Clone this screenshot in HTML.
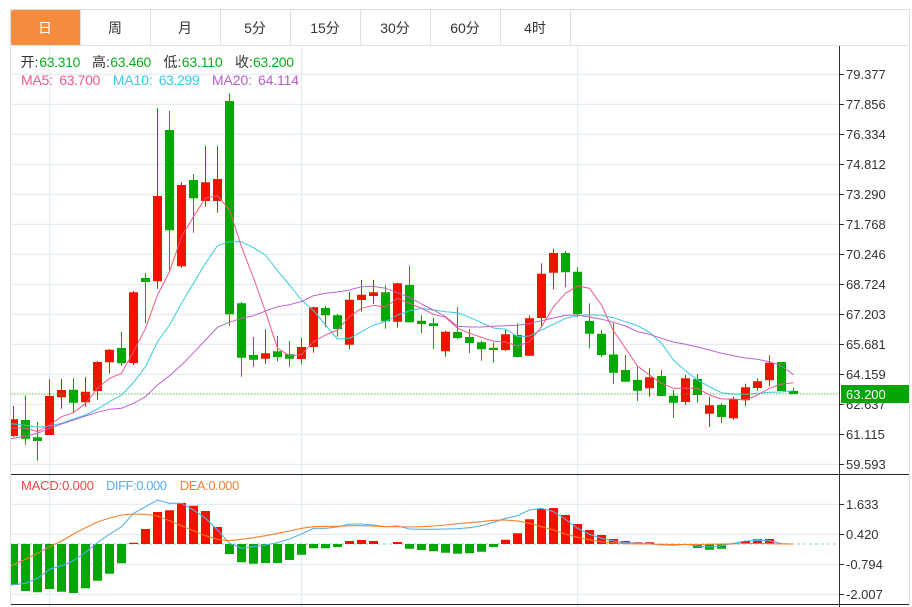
<!DOCTYPE html>
<html><head><meta charset="utf-8"><title>K线图</title>
<style>
html,body{margin:0;padding:0;background:#fff;width:912px;height:607px;overflow:hidden}
svg{display:block}
text{font-family:"Liberation Sans","Noto Sans CJK SC",sans-serif}
.ax{font-size:13px;fill:#333}
.tab{font-size:14px;fill:#333;text-anchor:middle}
.h{font-size:14px;fill:#333}
.g{font-size:14px;fill:#0cad1c}
</style></head><body>
<svg width="912" height="607" viewBox="0 0 912 607" xmlns="http://www.w3.org/2000/svg">
<defs><clipPath id="c"><rect x="11" y="46" width="828" height="561"/></clipPath></defs>
<rect x="11" y="10" width="70" height="35" rx="2" fill="#f68c3f"/>
<g stroke="#dddfe0" fill="none">
<path d="M10.5 9.5H909.5V606M10.5 9.5V606M11 45.5H909.5"/>
<path d="M80.5 10V45M150.5 10V45M220.5 10V45M290.5 10V45M360.5 10V45M430.5 10V45M500.5 10V45M570.5 10V45"/>
</g>
<text class="tab" x="45" y="33" style="fill:#fff">日</text>
<text class="tab" x="115" y="33">周</text>
<text class="tab" x="185" y="33">月</text>
<text class="tab" x="255" y="33">5分</text>
<text class="tab" x="325" y="33">15分</text>
<text class="tab" x="395" y="33">30分</text>
<text class="tab" x="465" y="33">60分</text>
<text class="tab" x="535" y="33">4时</text>

<g stroke="#e3ecf2" stroke-width="1.2" fill="none">
<path d="M11 74.4H839M11 104.4H839M11 134.4H839M11 164.4H839M11 194.4H839M11 224.4H839M11 254.4H839M11 284.4H839M11 314.4H839M11 344.4H839M11 374.4H839M11 404.4H839M11 434.4H839M11 464.4H839"/>
<path d="M11 504.4H839M11 534.4H839M11 564.4H839M11 594.4H839"/>
<path d="M49.5 46V607M301.5 46V607M577.5 46V607"/>
</g>

<g clip-path="url(#c)">
<path fill="none" stroke="#f31100" d="M13.5 406V437M49.5 379.3V435M61.5 379V408.7M85.5 377.3V406.7M97.5 361.3V400M109.5 349V373.3M133.5 291V365M157.5 108.3V288.7M181.5 182.3V267.7M205.5 145.7V206.7M217.5 145.7V212.7M265.5 329.3V363.7M301.5 338V363.7M313.5 306.7V352.7M349.5 292V349.3M361.5 280V311.7M373.5 279.7V304M397.5 282.7V327.7M445.5 330.7V356.7M505.5 330V351M529.5 315.3V356M541.5 263.3V326.7M553.5 248.7V289.3M649.5 368.3V396.7M685.5 375V405M709.5 396.7V427M733.5 396.7V419.7M745.5 383.7V406M757.5 378.3V390.7M769.5 355.3V386.3"/>
<path fill="none" stroke="#02a802" d="M25.5 395.3V444.7M37.5 422V460.7M73.5 378V413.3M121.5 332V365.7M145.5 273V323.3M169.5 111V270.7M193.5 174.3V232.7M229.5 93.3V325.7M241.5 301.7V376.7M253.5 337V366.7M277.5 336V361.3M289.5 341V366.7M325.5 306V327.3M337.5 314V336.7M385.5 285.3V328.7M409.5 265.7V322.3M421.5 315.3V333.3M433.5 317.7V348.7M457.5 307.3V339M469.5 329V353M481.5 340.7V360.7M493.5 342.7V362.7M517.5 323.3V357.3M565.5 251V287.3M577.5 267.3V317M589.5 303.3V348.3M601.5 330V357M613.5 323.3V384M625.5 355V381.7M637.5 366.7V401M661.5 370V396M673.5 390V417.7M697.5 374V402.7M721.5 403.3V423.3M793.5 387.7V394"/>
<path fill="#f31100" d="M9 419.3H18V436H9ZM45 396H54V435H45ZM57 390H66V397.3H57ZM81 391.7H90V402.3H81ZM93 362H102V391H93ZM105 349.7H114V362.3H105ZM129 292.3H138V363H129ZM153 196H162V281.3H153ZM177 185H186V266.3H177ZM201 182.3H210V201H201ZM213 179H222V201H213ZM261 353.3H270V358.7H261ZM297 347H306V359H297ZM309 307.3H318V347H309ZM345 299.7H354V344.7H345ZM357 294.7H366V300H357ZM369 292.3H378V296H369ZM393 283.3H402V321.7H393ZM441 331.7H450V351.3H441ZM501 334.3H510V350H501ZM525 318.3H534V355.7H525ZM537 273.7H546V318H537ZM549 253H558V272.7H549ZM645 377.3H654V388.3H645ZM681 378.3H690V402H681ZM705 405.3H714V413.7H705ZM729 399.3H738V418.3H729ZM741 387.3H750V400.3H741ZM753 381.3H762V388H753ZM765 362.7H774V380.3H765Z"/>
<path fill="#02a802" d="M21 420H30V438.7H21ZM33 437.3H42V441H33ZM69 389.7H78V402.7H69ZM117 348H126V363.3H117ZM141 278H150V282H141ZM165 130H174V230.3H165ZM189 180H198V198.3H189ZM225 101H234V314.3H225ZM237 303.3H246V357.7H237ZM249 355H258V359.7H249ZM273 351.3H282V357H273ZM285 354.3H294V358.7H285ZM321 308H330V315.3H321ZM333 315.3H342V329H333ZM381 292.3H390V321.3H381ZM405 285H414V322.3H405ZM417 320.7H426V324H417ZM429 323.3H438V326H429ZM453 332H462V338H453ZM465 337H474V343H465ZM477 342.3H486V349.3H477ZM489 347.7H498V350H489ZM513 335H522V357H513ZM561 253H570V272.3H561ZM573 271.7H582V314H573ZM585 321H594V333.7H585ZM597 333.7H606V355H597ZM609 354.5H618V372.7H609ZM621 370H630V381.7H621ZM633 380H642V390.7H633ZM657 376H666V396H657ZM669 395.7H678V402.7H669ZM693 379H702V395H693ZM717 405H726V417H717ZM777 362H786V391H777ZM789 391H798V394H789Z"/>
<g fill="none" stroke-width="1" stroke-linejoin="round">
<polyline stroke="#36cbe2" points="11,424 13.5,424 25.5,425.3 37.5,427.3 49.5,426 61.5,423.3 73.5,419 85.5,415 97.5,409 109.5,401.7 121.5,395 133.5,382.5 145.5,366.7 157.5,341.7 169.5,325 181.5,303.3 193.5,283.3 205.5,263.3 217.5,245.7 229.5,241.7 241.5,241.7 253.5,247.7 265.5,255 277.5,270.7 289.5,285 301.5,300 313.5,310.5 325.5,325 337.5,339 349.5,338.3 361.5,331.7 373.5,325 385.5,321.7 397.5,315 409.5,310.7 421.5,308.3 433.5,310 445.5,311.7 457.5,312.7 469.5,317.3 481.5,322.7 493.5,328 505.5,329.3 517.5,336.7 529.5,336 541.5,330 553.5,324.3 565.5,318.3 577.5,315.7 589.5,314.7 601.5,315.3 613.5,317.7 625.5,321.7 637.5,325.7 649.5,332.3 661.5,343.3 673.5,360 685.5,370.7 697.5,380 709.5,386.7 721.5,392.7 733.5,394 745.5,394.3 757.5,393.3 769.5,392.3 781.5,392 793.5,390.7"/>
<polyline stroke="#bb62cc" points="11,439 13.5,438.3 25.5,436 37.5,433.3 49.5,428.3 61.5,424 73.5,420 85.5,416 97.5,412.3 109.5,409.3 121.5,408.3 133.5,403.3 145.5,396.7 157.5,385 169.5,375.7 181.5,365 193.5,352.7 205.5,340 217.5,327.3 229.5,322.3 241.5,318.3 253.5,315.7 265.5,311 277.5,306.7 289.5,304.7 301.5,301.5 313.5,295.7 325.5,293.3 337.5,292 349.5,290 361.5,286.7 373.5,286.3 385.5,288.3 397.5,292.7 409.5,297.3 421.5,304 433.5,310 445.5,316.7 457.5,326.3 469.5,327 481.5,327 493.5,326.3 505.5,325.7 517.5,325.3 529.5,323.7 541.5,320.7 553.5,318 565.5,315.3 577.5,315 589.5,317 601.5,319.2 613.5,322.3 625.5,326 637.5,331.7 649.5,334.3 661.5,338.3 673.5,342 685.5,344.3 697.5,347 709.5,350 721.5,353.3 733.5,355.7 745.5,358 757.5,359.3 769.5,361.7 781.5,366 793.5,374.7"/>
<polyline stroke="#f4568c" points="11,428 13.5,428 25.5,428 37.5,431.7 49.5,425 61.5,416.7 73.5,412.7 85.5,403.3 97.5,388.3 109.5,378.3 121.5,373.3 133.5,351.7 145.5,328.3 157.5,295 169.5,271.7 181.5,236.7 193.5,216.7 205.5,198 217.5,195.7 229.5,210 241.5,246.7 253.5,278 265.5,311.7 277.5,348.3 289.5,355.7 301.5,354.7 313.5,341.7 325.5,335 337.5,330 349.5,316.7 361.5,308.3 373.5,305.3 385.5,307 397.5,298.3 409.5,303.3 421.5,308.3 433.5,314.3 445.5,317.3 457.5,328.3 469.5,333.3 481.5,337.3 493.5,341.3 505.5,342 517.5,346 529.5,341.7 541.5,326.7 553.5,306.7 565.5,293.3 577.5,286 589.5,288.3 601.5,305 613.5,331 625.5,348.3 637.5,366 649.5,375 661.5,383.3 673.5,388.3 685.5,388.3 697.5,388.3 709.5,395 721.5,399 733.5,399 745.5,400 757.5,395 769.5,388.3 781.5,384 793.5,382.7"/>
</g>
<path d="M11 394H838" stroke="#2fae2f" stroke-opacity=".65" stroke-width="1.2" stroke-dasharray="1.5 1.5" fill="none"/>

<path d="M11 544H836" stroke="#7fcbe6" stroke-dasharray="3 3" fill="none"/>
<path fill="#f31100" d="M129 542.7H138V544H129ZM141 529H150V544H141ZM153 512H162V544H153ZM165 510.3H174V544H165ZM177 503H186V544H177ZM189 505.7H198V544H189ZM201 511H210V544H201ZM213 527H222V544H213ZM345 541H354V544H345ZM357 540H366V544H357ZM369 541H378V544H369ZM393 542H402V544H393ZM501 539.7H510V544H501ZM513 533.3H522V544H513ZM525 519.3H534V544H525ZM537 509H546V544H537ZM549 508H558V544H549ZM561 515H570V544H561ZM573 524H582V544H573ZM585 530H594V544H585ZM597 535H606V544H597ZM609 539H618V544H609ZM621 541H630V544H621ZM633 542.3H642V544H633ZM645 542.3H654V544H645ZM741 541H750V544H741ZM753 539.3H762V544H753ZM765 539H774V544H765Z"/>
<path fill="#02a802" d="M9 544H18V585H9ZM21 544H30V591H21ZM33 544H42V592.3H33ZM45 544H54V589H45ZM57 544H66V591.7H57ZM69 544H78V593H69ZM81 544H90V588.3H81ZM93 544H102V580.7H93ZM105 544H114V573.7H105ZM117 544H126V563.3H117ZM225 544H234V554H225ZM237 544H246V562.3H237ZM249 544H258V563.7H249ZM261 544H270V563H261ZM273 544H282V563H273ZM285 544H294V560H285ZM297 544H306V554.7H297ZM309 544H318V548.3H309ZM321 544H330V548.3H321ZM333 544H342V547H333ZM405 544H414V548.7H405ZM417 544H426V550H417ZM429 544H438V551.3H429ZM441 544H450V552.7H441ZM453 544H462V553.7H453ZM465 544H474V553.3H465ZM477 544H486V551.7H477ZM489 544H498V547H489ZM657 544H666V545.3H657ZM669 544H678V545.3H669ZM693 544H702V548H693ZM705 544H714V549.7H705ZM717 544H726V548.7H717Z"/>
<g fill="none" stroke-width="1.1" stroke-linejoin="round">
<polyline stroke="#5aaeee" points="11,585 25.5,583.3 37.5,578.3 49.5,569.3 61.5,565.7 73.5,560.7 85.5,552.3 97.5,542.7 109.5,534.3 121.5,526.7 133.5,513.3 145.5,506.7 157.5,500 169.5,503.3 181.5,503.3 193.5,510 205.5,518.3 217.5,530 229.5,543.3 241.5,548.3 253.5,546.7 265.5,545 277.5,542.7 289.5,539 301.5,534 313.5,528.3 325.5,528.3 337.5,527 349.5,524 361.5,524 373.5,525 385.5,526.7 397.5,526 409.5,529 421.5,529.3 433.5,529.3 445.5,529 457.5,528.7 469.5,527.7 481.5,525.7 493.5,522.3 505.5,518.3 517.5,515.7 529.5,510 541.5,508.3 553.5,511.7 565.5,519.3 577.5,528.3 589.5,534.3 601.5,538.3 613.5,541 625.5,542.7 637.5,543.3 649.5,543.7 661.5,545 673.5,545.3 685.5,544.3 697.5,546 709.5,547 721.5,545.7 733.5,543.3 745.5,541 757.5,540.3 769.5,540.7 781.5,543.7 793.5,544"/>
<polyline stroke="#f87e28" points="11,565.7 25.5,559.3 37.5,553.3 49.5,546.7 61.5,541 73.5,534 85.5,527.7 97.5,522 109.5,518 121.5,515 133.5,514 145.5,514.3 157.5,516 169.5,520.7 181.5,525.7 193.5,530.7 205.5,535.7 217.5,539.3 229.5,540.7 241.5,539.3 253.5,537.7 265.5,535.7 277.5,533.3 289.5,531 301.5,528.3 313.5,526.7 325.5,526.3 337.5,526.3 349.5,525.7 361.5,525.7 373.5,526 385.5,526.7 397.5,526.7 409.5,527 421.5,526.7 433.5,526 445.5,525 457.5,523.7 469.5,522.7 481.5,521.7 493.5,520.3 505.5,520 517.5,521 529.5,523.3 541.5,526.7 553.5,530 565.5,534 577.5,537.3 589.5,539.7 601.5,541.7 613.5,543 625.5,543.7 637.5,544 649.5,544 661.5,544.3 673.5,544.5 685.5,544.5 697.5,544.5 709.5,544.2 721.5,544 733.5,543.8 745.5,543.5 757.5,543.5 769.5,543.7 781.5,544 793.5,544"/>
</g>
</g>

<g fill="none" stroke="#222">
<path d="M11 474.5H909M11 604.5H909"/>
</g>
<path d="M839.5 46V607" stroke="#333" fill="none"/>
<path d="M840 74.5h4M840 104.5h4M840 134.5h4M840 164.5h4M840 194.5h4M840 224.5h4M840 254.5h4M840 284.5h4M840 314.5h4M840 344.5h4M840 374.5h4M840 404.5h4M840 434.5h4M840 464.5h4M840 504.5h4M840 534.5h4M840 564.5h4M840 594.5h4" stroke="#333" fill="none"/>

<text class="ax" x="846" y="79">79.377</text>
<text class="ax" x="846" y="109">77.856</text>
<text class="ax" x="846" y="139">76.334</text>
<text class="ax" x="846" y="169">74.812</text>
<text class="ax" x="846" y="199">73.290</text>
<text class="ax" x="846" y="229">71.768</text>
<text class="ax" x="846" y="259">70.246</text>
<text class="ax" x="846" y="289">68.724</text>
<text class="ax" x="846" y="319">67.203</text>
<text class="ax" x="846" y="349">65.681</text>
<text class="ax" x="846" y="379">64.159</text>
<text class="ax" x="846" y="409">62.637</text>
<text class="ax" x="846" y="439">61.115</text>
<text class="ax" x="846" y="469">59.593</text>
<text class="ax" x="846" y="509">1.633</text>
<text class="ax" x="846" y="539">0.420</text>
<text class="ax" x="846" y="569">-0.794</text>
<text class="ax" x="846" y="599">-2.007</text>

<rect x="841" y="385" width="68" height="18" fill="#05a505"/>
<text x="846" y="399" style="font-size:13px;fill:#fff">63.200</text>

<text class="h" x="20.5" y="67">开:</text><text class="g" x="39.3" y="67" textLength="41">63.310</text>
<text class="h" x="92" y="67">高:</text><text class="g" x="110.3" y="67" textLength="41">63.460</text>
<text class="h" x="163.5" y="67">低:</text><text class="g" x="181.7" y="67" textLength="41">63.110</text>
<text class="h" x="235" y="67">收:</text><text class="g" x="253" y="67" textLength="41">63.200</text>

<g style="font-size:14px">
<text x="21" y="85" fill="#f4568c" textLength="32">MA5:</text><text x="59.3" y="85" fill="#f4568c" textLength="41">63.700</text>
<text x="112.7" y="85" fill="#36cbe2" textLength="40">MA10:</text><text x="158.7" y="85" fill="#36cbe2" textLength="41">63.299</text>
<text x="212" y="85" fill="#b85cc8" textLength="40">MA20:</text><text x="258" y="85" fill="#b85cc8" textLength="41">64.114</text>
</g>
<g style="font-size:13px">
<text x="21" y="490" fill="#f04545" textLength="73">MACD:0.000</text>
<text x="106" y="490" fill="#5aaeee" textLength="61">DIFF:0.000</text>
<text x="179.7" y="490" fill="#f58030" textLength="59.5">DEA:0.000</text>
</g>
</svg>
</body></html>
